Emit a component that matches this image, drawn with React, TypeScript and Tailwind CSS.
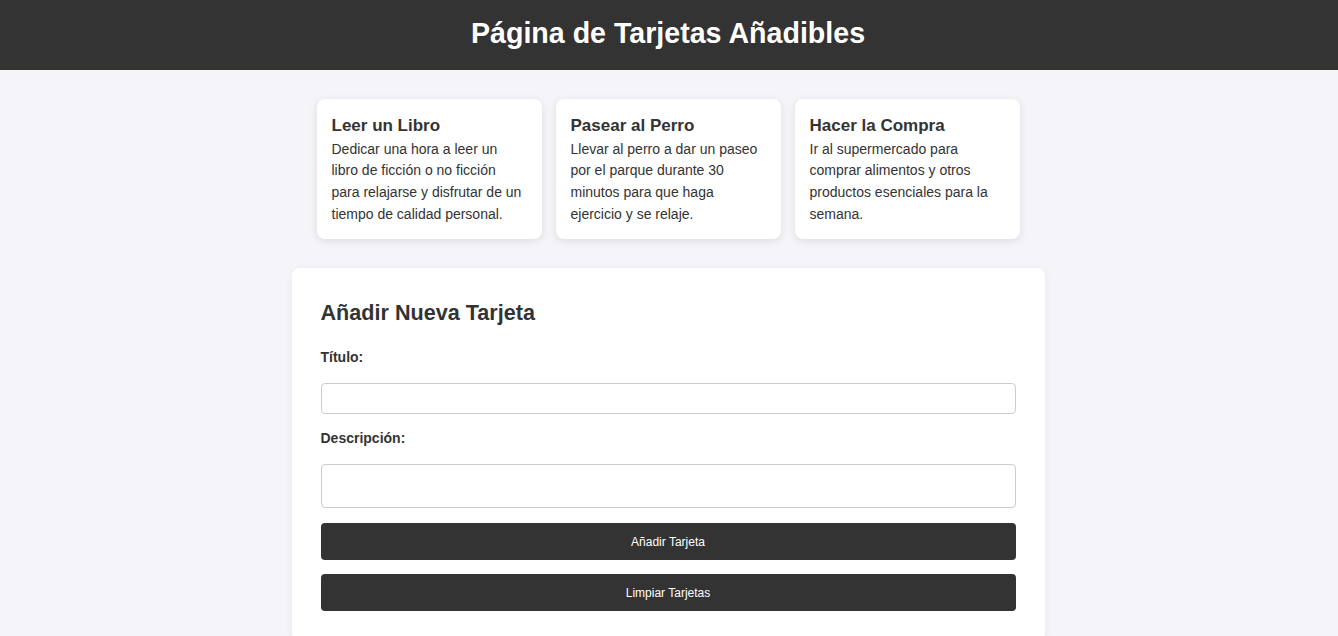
export default function App() {
  const cards = [
    {
      title: 'Leer un Libro',
      text: 'Dedicar una hora a leer un libro de ficción o no ficción para relajarse y disfrutar de un tiempo de calidad personal.',
    },
    {
      title: 'Pasear al Perro',
      text: 'Llevar al perro a dar un paseo por el parque durante 30 minutos para que haga ejercicio y se relaje.',
    },
    {
      title: 'Hacer la Compra',
      text: 'Ir al supermercado para comprar alimentos y otros productos esenciales para la semana.',
    },
  ];

  return (
    <div className="min-h-screen bg-[#f4f4f9] text-[#333] font-['Liberation_Sans',Arial,sans-serif]">
      {/* Header */}
      <header className="h-[70px] bg-[#333] flex items-center justify-center pr-[2px]">
        <h1 className="text-[28.6px] font-bold text-white leading-none -mt-[4px]">Página de Tarjetas Añadibles</h1>
      </header>

      {/* Tarjetas */}
      <div className="flex justify-center gap-[14px] pt-[29px] pr-[2px]">
        {cards.map(card => (
          <div key={card.title} className="w-[225px] bg-white rounded-lg px-[15px] pt-[17px] pb-[14px] shadow-[0_2px_8px_rgba(0,0,0,0.1)]">
            <h3 className="text-[17px] font-bold leading-[1.15] mb-[3px]">{card.title}</h3>
            <p className="text-[14px] leading-[21.7px]">{card.text}</p>
          </div>
        ))}
      </div>

      {/* Formulario */}
      <div className="w-[753px] mx-auto mt-[29px] bg-white rounded-lg shadow-[0_2px_8px_rgba(0,0,0,0.06)] px-[29px] pt-[33px] pb-[30px] relative -left-[1px]">
        <h2 className="text-[21.6px] font-bold leading-[1.15] mb-[23px]">Añadir Nueva Tarjeta</h2>
        <label className="block text-[14px] font-bold leading-[16px] mb-[18px]">Título:</label>
        <input type="text" className="block w-full h-[31px] border border-[#ccc] rounded-[4px] bg-white mb-[16px]" />
        <label className="block text-[14px] font-bold leading-[16px] mb-[18px]">Descripción:</label>
        <textarea className="block w-full h-[44px] border border-[#ccc] rounded-[4px] bg-white resize-none mb-[15px]" />
        <button className="block w-full h-[37px] bg-[#333] text-white text-[12px] rounded-[4px] mb-[14px]">Añadir Tarjeta</button>
        <button className="block w-full h-[37px] bg-[#333] text-white text-[12px] rounded-[4px]">Limpiar Tarjetas</button>
      </div>
    </div>
  );
}
